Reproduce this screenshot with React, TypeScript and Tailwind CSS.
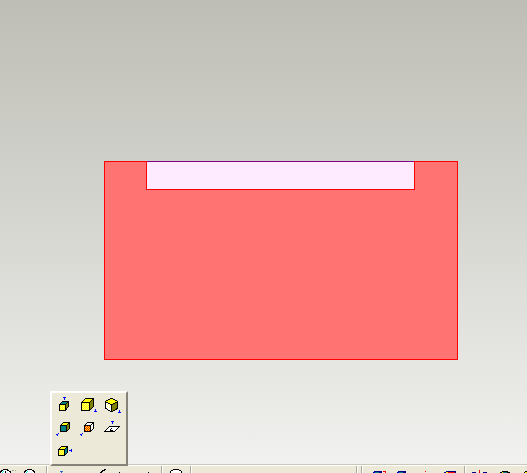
const COLORS: Record<string, string> = {
  k: "#000000",
  b: "#0000ff",
  n: "#000080",
  y: "#ffff00",
  l: "#ffff66",
  w: "#ffffff",
  o: "#808000",
  t: "#008080",
  r: "#ff0000",
  c: "#00ffff",
  g: "#aca899",
  s: "#316ac5",
};

function Pixels({ rows }: { rows: string[] }) {
  return (
    <svg width={24} height={23} viewBox="0 0 24 23" shapeRendering="crispEdges" aria-hidden="true">
      {rows.flatMap((row, y) =>
        [...row].map((ch, x) =>
          COLORS[ch] ? <rect key={`${x}-${y}`} x={x} y={y} width={1} height={1} fill={COLORS[ch]} /> : null
        )
      )}
    </svg>
  );
}

const views = [
  {
    label: "Top view",
    rows: [
      "", "", "",
      "...........bbb",
      "............b",
      "............b",
      "",
      "..........kkkkkkk",
      ".........ktttttkk",
      "........ktttttkok",
      ".......kkkkkkkook",
      ".......klylylkook",
      ".......kylylykook",
      ".......klylylkok",
      ".......kylylykk",
      ".......klylylkk",
      ".......kkkkkkk",
    ],
  },
  {
    label: "Standard view",
    rows: [
      "", "", "", "",
      ".........kkkkkkkkk",
      "........kyyyyyyykk",
      ".......kyyyyyyykok",
      "......kyyyyyyykook",
      ".....kkkkkkkkkoook",
      ".....kylylylykoook",
      ".....klylylylkoook",
      ".....kylylylykoook",
      ".....klylylylkoook",
      ".....kylylylykook",
      ".....klylylylkok",
      ".....kylylylykk....b",
      ".....kkkkkkkkk.....b",
      "..................bbb",
    ],
  },
  {
    label: "Isometric view",
    rows: [
      "", "", "", "",
      "..........kkk",
      "........kkyyykk",
      "......kkyyyyyyykk",
      ".....kyyyyyyyyyyyk",
      ".....kkkyyyyyyykkk",
      ".....kwwkkyyykkook",
      ".....kwlwwkkkooook",
      ".....kwwwlwkoooook",
      ".....kwlwwwkoooook",
      ".....kwwwlwkoooook",
      ".....kkwwwwkooookk",
      ".......kwwwkoookk",
      "........kkwkokk....b",
      "..........kkk......b",
      "..................bbb",
    ],
  },
  {
    label: "Front view",
    rows: [
      "", "", "", "", "",
      "...........kkkkkkk",
      "..........kyyyyykk",
      ".........kyyyyykok",
      "........kkkkkkkook",
      "........ktttttkook",
      "........ktttttkook",
      "........ktttttkook",
      "........ktttttkok",
      "........ktttttkk",
      "........kkkkkkk",
      "",
      "......b",
      "....bb",
      ".....b",
    ],
  },
  {
    label: "Back view",
    rows: [
      "", "", "", "", "",
      "...........kkkkkkk",
      "..........kwwwwwkk",
      ".........kwwwwwkwk",
      "........kkkkkkkwwk",
      "........kryryrkwwk",
      "........kyryrykwwk",
      "........kryryrkwwk",
      "........kyryrykwk",
      "........kryryrkk",
      "........kkkkkkk",
      "",
      "......b",
      "....bb",
      ".....b",
    ],
  },
  {
    label: "Sketch plane",
    rows: [
      "", "", "", "",
      "...........bbb",
      "............b",
      "............b",
      "",
      "",
      ".........kkkkkkkkkkk",
      "........kwwwwwwwwwk",
      ".......kwwwkwwwwwk",
      "......kwwwkwwwwwk",
      ".....kwwwwkkkwwk",
      "....kkkkkkkkkkk",
    ],
  },
  {
    label: "Right view",
    rows: [
      "", "", "", "", "", "",
      ".........kkkkkkk",
      "........kyyyyykk",
      ".......kyyyyyktk",
      "......kkkkkkkttk...b",
      "......klylylkttk.bbb",
      "......kylylykttk...b",
      "......klylylkttk",
      "......kylylyktk",
      "......klylylkk",
      "......kkkkkkk",
    ],
  },
];

function ViewPalette() {
  return (
    <div className="absolute bottom-[7px] left-[50px] grid grid-cols-3 border-2 border-t-white border-l-white border-r-[#858278] border-b-[#858278] bg-[#ece9d8] py-px pr-0.5">
      {views.map((v) => (
        <button key={v.label} type="button" aria-label={v.label} title={v.label} className="block">
          <Pixels rows={v.rows} />
        </button>
      ))}
    </div>
  );
}

function Tool({ label, rows }: { label: string; rows: string[] }) {
  return (
    <button type="button" aria-label={label} title={label} className="block w-6 shrink-0">
      <Pixels rows={rows} />
    </button>
  );
}

function Separator() {
  return <span className="h-6 w-0.5 shrink-0 border-l border-[#aca899] bg-white" />;
}

function BottomBar() {
  return (
    <div className="h-[9px] overflow-hidden border-t border-[#c9c6ba]">
      <div className="flex items-start border-t border-white bg-[#ece9d8]">
        <div className="flex w-[46px] shrink-0 overflow-hidden">
          <Tool label="Zoom in" rows={["", "", "", "...kkkkk", ".kkwwwwkk...gg.g", "kkwcwkwwwkk", "kwcwwkwwwwk"]} />
          <Tool label="Zoom out" rows={["", "", "", "...kkkkk", ".kkwwwwwkk", "kkwcwwwwwkk", "kwcwwwwwwwk"]} />
        </div>
        <Separator />
        <div className="flex w-[113px] shrink-0 overflow-hidden pl-0.5">
          <Tool label="Point" rows={["", "", "", "", "", "..........sss", "...........s"]} />
          <Tool label="Line" rows={["", "", "", "", "", "", ""]} />
          <Tool label="Arc" rows={["", "", "", "......kk", "....kkk", "...kk", "..kk.................k"]} />
          <Tool label="Spline" rows={["", "", "", "", "", "", ""]} />
          <Tool label="Curve" rows={["", "", "", "", "", "", "..k"]} />
        </div>
        <Separator />
        <div className="w-[27px] shrink-0">
          <Tool label="Find" rows={["", "", "", "..........kkkkkk", "........kkwwwwwwkk", ".......kwwwwwwwwwwk", ".......kwwwwwwwwwwk"]} />
        </div>
        <Separator />
        <div className="flex-1" />
        <div className="flex w-[171px] shrink-0 overflow-hidden">
          <Separator />
          <div className="w-[3px] shrink-0" />
          <Separator />
          <div className="flex w-[101px] shrink-0 pl-0.5">
            <Tool label="Solid" rows={["", "", "", "", ".........nnnnnnnn.rrr", "........nbttttnnn...r", ".......nbbttnnbbn...r"]} />
            <Tool label="Surface" rows={["", "", "", "", ".........nnnnnnnn", "........nbttttnnn", ".......nbbttnnbbn"]} />
            <Tool label="Axis" rows={["", "", "", "", "............r", "", "............r"]} />
            <Tool label="Round" rows={["", "", "", "", ".........nnnnnnnnnn", ".......nnyyrrrrrrrn", "......nyyrrrrrrrrrn"]} />
          </div>
          <Separator />
          <div className="flex shrink-0 pl-0.5">
            <Tool label="Mirror" rows={["", "", "", "...........r", "...........r", "....nnnn...r...nnnn", "....yyyn...r...nyyy"]} />
            <Tool label="Merge" rows={["", "", "", "", "..........kkkkkk", "........kkyttttkkk", ".......kyyyyttttkk"]} />
            <Tool label="Trim" rows={["", "", "", "", ".........kkkkkk", "........kyyyyyyk", ".......kyyyyyyyyk"]} />
          </div>
        </div>
      </div>
    </div>
  );
}

export default function App() {
  return (
    <main className="relative flex h-screen flex-col overflow-hidden">
      <section className="min-h-0 flex-1 bg-linear-to-b from-[#bebeb6] to-[#f1f1ef]">
        <svg className="block h-full w-full" shapeRendering="crispEdges" role="img" aria-label="Model section">
          <rect x="104.5" y="161.5" width="353" height="198" fill="#ff7373" stroke="#ff0000" />
          <rect x="146.5" y="161.5" width="268" height="28" fill="#ffebff" stroke="#ff0000" />
          <path d="M147 161.5H414" stroke="#800080" />
        </svg>
      </section>
      <BottomBar />
      <ViewPalette />
    </main>
  );
}
